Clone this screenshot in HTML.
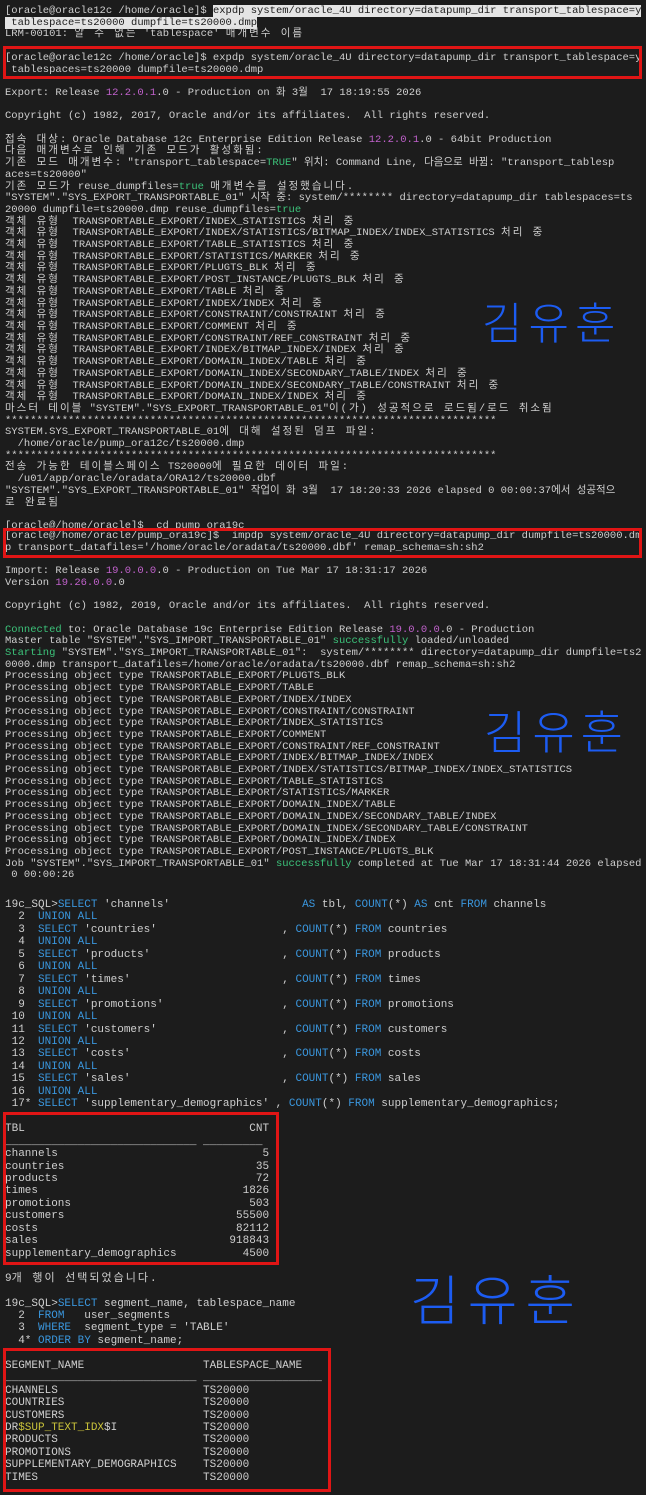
<!DOCTYPE html>
<html><head><meta charset="utf-8"><style>
html,body{margin:0;padding:0;background:#1c1c1c;}
body{width:646px;height:1495px;position:relative;overflow:hidden;}
pre{position:absolute;margin:0;left:5px;font-family:"Liberation Mono","Noto Sans CJK KR",monospace;color:#cfcfcf;white-space:pre;}
.a{font-size:10.5px;line-height:11.7px;}
.c{font-size:11px;line-height:12.45px;top:899px;}
.p{color:#c061cb}.g{color:#3cc37a}.k{color:#3a96dd}.y{color:#c9c23a}
.hl{background:#e4e4e4;color:#1c1c1c}
.ko{letter-spacing:2px}
.box{position:absolute;border:3px solid #e01515;box-sizing:border-box;}
.sig{position:absolute;color:#1c5cf2;font-family:"Noto Sans CJK KR",sans-serif;font-weight:300;letter-spacing:6px;}
</style></head><body>
<pre class="a" style="top:6px">[oracle@oracle12c /home/oracle]$ <span class="hl">expdp system/oracle_4U directory=datapump_dir transport_tablespace=y</span>
<span class="hl"> tablespace=ts20000 dumpfile=ts20000.dmp</span>
LRM-00101: <span class="ko">알 수 없는</span> 'tablespace' <span class="ko">매개변수 이름</span>

[oracle@oracle12c /home/oracle]$ expdp system/oracle_4U directory=datapump_dir transport_tablespace=y
 tablespaces=ts20000 dumpfile=ts20000.dmp

Export: Release <span class="p">12.2.0.1</span>.0 - Production on 화 3월  17 18:19:55 2026

Copyright (c) 1982, 2017, Oracle and/or its affiliates.  All rights reserved.

<span class="ko">접속 대상</span>: Oracle Database 12c Enterprise Edition Release <span class="p">12.2.0.1</span>.0 - 64bit Production
<span class="ko">다음 매개변수로 인해 기존 모드가 활성화됨</span>:
<span class="ko">기존 모드 매개변수</span>: "transport_tablespace=<span class="g">TRUE</span>" 위치: Command Line, 다음으로 바뀜: "transport_tablesp
aces=ts20000"
<span class="ko">기존 모드가</span> reuse_dumpfiles=<span class="g">true</span> <span class="ko">매개변수를 설정했습니다</span>.
"SYSTEM"."SYS_EXPORT_TRANSPORTABLE_01" 시작 중: system/******** directory=datapump_dir tablespaces=ts
20000 dumpfile=ts20000.dmp reuse_dumpfiles=<span class="g">true</span>
<span class="ko">객체 유형</span>  TRANSPORTABLE_EXPORT/INDEX_STATISTICS <span class="ko">처리 중</span>
<span class="ko">객체 유형</span>  TRANSPORTABLE_EXPORT/INDEX/STATISTICS/BITMAP_INDEX/INDEX_STATISTICS <span class="ko">처리 중</span>
<span class="ko">객체 유형</span>  TRANSPORTABLE_EXPORT/TABLE_STATISTICS <span class="ko">처리 중</span>
<span class="ko">객체 유형</span>  TRANSPORTABLE_EXPORT/STATISTICS/MARKER <span class="ko">처리 중</span>
<span class="ko">객체 유형</span>  TRANSPORTABLE_EXPORT/PLUGTS_BLK <span class="ko">처리 중</span>
<span class="ko">객체 유형</span>  TRANSPORTABLE_EXPORT/POST_INSTANCE/PLUGTS_BLK <span class="ko">처리 중</span>
<span class="ko">객체 유형</span>  TRANSPORTABLE_EXPORT/TABLE <span class="ko">처리 중</span>
<span class="ko">객체 유형</span>  TRANSPORTABLE_EXPORT/INDEX/INDEX <span class="ko">처리 중</span>
<span class="ko">객체 유형</span>  TRANSPORTABLE_EXPORT/CONSTRAINT/CONSTRAINT <span class="ko">처리 중</span>
<span class="ko">객체 유형</span>  TRANSPORTABLE_EXPORT/COMMENT <span class="ko">처리 중</span>
<span class="ko">객체 유형</span>  TRANSPORTABLE_EXPORT/CONSTRAINT/REF_CONSTRAINT <span class="ko">처리 중</span>
<span class="ko">객체 유형</span>  TRANSPORTABLE_EXPORT/INDEX/BITMAP_INDEX/INDEX <span class="ko">처리 중</span>
<span class="ko">객체 유형</span>  TRANSPORTABLE_EXPORT/DOMAIN_INDEX/TABLE <span class="ko">처리 중</span>
<span class="ko">객체 유형</span>  TRANSPORTABLE_EXPORT/DOMAIN_INDEX/SECONDARY_TABLE/INDEX <span class="ko">처리 중</span>
<span class="ko">객체 유형</span>  TRANSPORTABLE_EXPORT/DOMAIN_INDEX/SECONDARY_TABLE/CONSTRAINT <span class="ko">처리 중</span>
<span class="ko">객체 유형</span>  TRANSPORTABLE_EXPORT/DOMAIN_INDEX/INDEX <span class="ko">처리 중</span>
<span class="ko">마스터 테이블</span> "SYSTEM"."SYS_EXPORT_TRANSPORTABLE_01"<span class="ko">이(가) 성공적으로 로드됨/로드 취소됨</span>
******************************************************************************
SYSTEM.SYS_EXPORT_TRANSPORTABLE_01<span class="ko">에 대해 설정된 덤프 파일</span>:
  /home/oracle/pump_ora12c/ts20000.dmp
******************************************************************************
<span class="ko">전송 가능한 테이블스페이스</span> TS20000<span class="ko">에 필요한 데이터 파일</span>:
  /u01/app/oracle/oradata/ORA12/ts20000.dbf
"SYSTEM"."SYS_EXPORT_TRANSPORTABLE_01" 작업이 화 3월  17 18:20:33 2026 elapsed 0 00:00:37에서 성공적으
<span class="ko">로 완료됨</span>

[oracle@/home/oracle]$  cd pump_ora19c</pre>
<pre class="a" style="top:531px">[oracle@/home/oracle/pump_ora19c]$  impdp system/oracle_4U directory=datapump_dir dumpfile=ts20000.dm
p transport_datafiles='/home/oracle/oradata/ts20000.dbf' remap_schema=sh:sh2

Import: Release <span class="p">19.0.0.0</span>.0 - Production on Tue Mar 17 18:31:17 2026
Version <span class="p">19.26.0.0</span>.0

Copyright (c) 1982, 2019, Oracle and/or its affiliates.  All rights reserved.

<span class="g">Connected</span> to: Oracle Database 19c Enterprise Edition Release <span class="p">19.0.0.0</span>.0 - Production
Master table "SYSTEM"."SYS_IMPORT_TRANSPORTABLE_01" <span class="g">successfully</span> loaded/unloaded
<span class="g">Starting</span> "SYSTEM"."SYS_IMPORT_TRANSPORTABLE_01":  system/******** directory=datapump_dir dumpfile=ts2
0000.dmp transport_datafiles=/home/oracle/oradata/ts20000.dbf remap_schema=sh:sh2
Processing object type TRANSPORTABLE_EXPORT/PLUGTS_BLK
Processing object type TRANSPORTABLE_EXPORT/TABLE
Processing object type TRANSPORTABLE_EXPORT/INDEX/INDEX
Processing object type TRANSPORTABLE_EXPORT/CONSTRAINT/CONSTRAINT
Processing object type TRANSPORTABLE_EXPORT/INDEX_STATISTICS
Processing object type TRANSPORTABLE_EXPORT/COMMENT
Processing object type TRANSPORTABLE_EXPORT/CONSTRAINT/REF_CONSTRAINT
Processing object type TRANSPORTABLE_EXPORT/INDEX/BITMAP_INDEX/INDEX
Processing object type TRANSPORTABLE_EXPORT/INDEX/STATISTICS/BITMAP_INDEX/INDEX_STATISTICS
Processing object type TRANSPORTABLE_EXPORT/TABLE_STATISTICS
Processing object type TRANSPORTABLE_EXPORT/STATISTICS/MARKER
Processing object type TRANSPORTABLE_EXPORT/DOMAIN_INDEX/TABLE
Processing object type TRANSPORTABLE_EXPORT/DOMAIN_INDEX/SECONDARY_TABLE/INDEX
Processing object type TRANSPORTABLE_EXPORT/DOMAIN_INDEX/SECONDARY_TABLE/CONSTRAINT
Processing object type TRANSPORTABLE_EXPORT/DOMAIN_INDEX/INDEX
Processing object type TRANSPORTABLE_EXPORT/POST_INSTANCE/PLUGTS_BLK
Job "SYSTEM"."SYS_IMPORT_TRANSPORTABLE_01" <span class="g">successfully</span> completed at Tue Mar 17 18:31:44 2026 elapsed
 0 00:00:26</pre>
<pre class="c">19c_SQL&gt;<span class="k">SELECT</span> 'channels'                    <span class="k">AS</span> tbl, <span class="k">COUNT</span>(*) <span class="k">AS</span> cnt <span class="k">FROM</span> channels
  2  <span class="k">UNION ALL</span>
  3  <span class="k">SELECT</span> 'countries'                   , <span class="k">COUNT</span>(*) <span class="k">FROM</span> countries
  4  <span class="k">UNION ALL</span>
  5  <span class="k">SELECT</span> 'products'                    , <span class="k">COUNT</span>(*) <span class="k">FROM</span> products
  6  <span class="k">UNION ALL</span>
  7  <span class="k">SELECT</span> 'times'                       , <span class="k">COUNT</span>(*) <span class="k">FROM</span> times
  8  <span class="k">UNION ALL</span>
  9  <span class="k">SELECT</span> 'promotions'                  , <span class="k">COUNT</span>(*) <span class="k">FROM</span> promotions
 10  <span class="k">UNION ALL</span>
 11  <span class="k">SELECT</span> 'customers'                   , <span class="k">COUNT</span>(*) <span class="k">FROM</span> customers
 12  <span class="k">UNION ALL</span>
 13  <span class="k">SELECT</span> 'costs'                       , <span class="k">COUNT</span>(*) <span class="k">FROM</span> costs
 14  <span class="k">UNION ALL</span>
 15  <span class="k">SELECT</span> 'sales'                       , <span class="k">COUNT</span>(*) <span class="k">FROM</span> sales
 16  <span class="k">UNION ALL</span>
 17* <span class="k">SELECT</span> 'supplementary_demographics' , <span class="k">COUNT</span>(*) <span class="k">FROM</span> supplementary_demographics;

TBL                                  CNT
_____________________________ _________
channels                               5
countries                             35
products                              72
times                               1826
promotions                           503
customers                          55500
costs                              82112
sales                             918843
supplementary_demographics          4500

9<span class="ko">개 행이 선택되었습니다</span>.

19c_SQL&gt;<span class="k">SELECT</span> segment_name, tablespace_name
  2  <span class="k">FROM</span>   user_segments
  3  <span class="k">WHERE</span>  segment_type = 'TABLE'
  4* <span class="k">ORDER BY</span> segment_name;

SEGMENT_NAME                  TABLESPACE_NAME
_____________________________ __________________
CHANNELS                      TS20000
COUNTRIES                     TS20000
CUSTOMERS                     TS20000
DR<span class="y">$SUP_TEXT_IDX</span>$I             TS20000
PRODUCTS                      TS20000
PROMOTIONS                    TS20000
SUPPLEMENTARY_DEMOGRAPHICS    TS20000
TIMES                         TS20000</pre>
<div class="box" style="left:3px;top:46px;width:639px;height:33px"></div>
<div class="box" style="left:3px;top:528px;width:639px;height:30px"></div>
<div class="box" style="left:3px;top:1112px;width:276px;height:153px"></div>
<div class="box" style="left:3px;top:1348px;width:328px;height:144px"></div>
<div class="sig" style="left:482px;top:290px;font-size:44px;line-height:60px">김유훈</div>
<div class="sig" style="left:484px;top:700px;font-size:46px;line-height:60px">김유훈</div>
<div class="sig" style="left:410px;top:1262px;font-size:54px;line-height:70px;letter-spacing:8px">김유훈</div>
</body></html>
